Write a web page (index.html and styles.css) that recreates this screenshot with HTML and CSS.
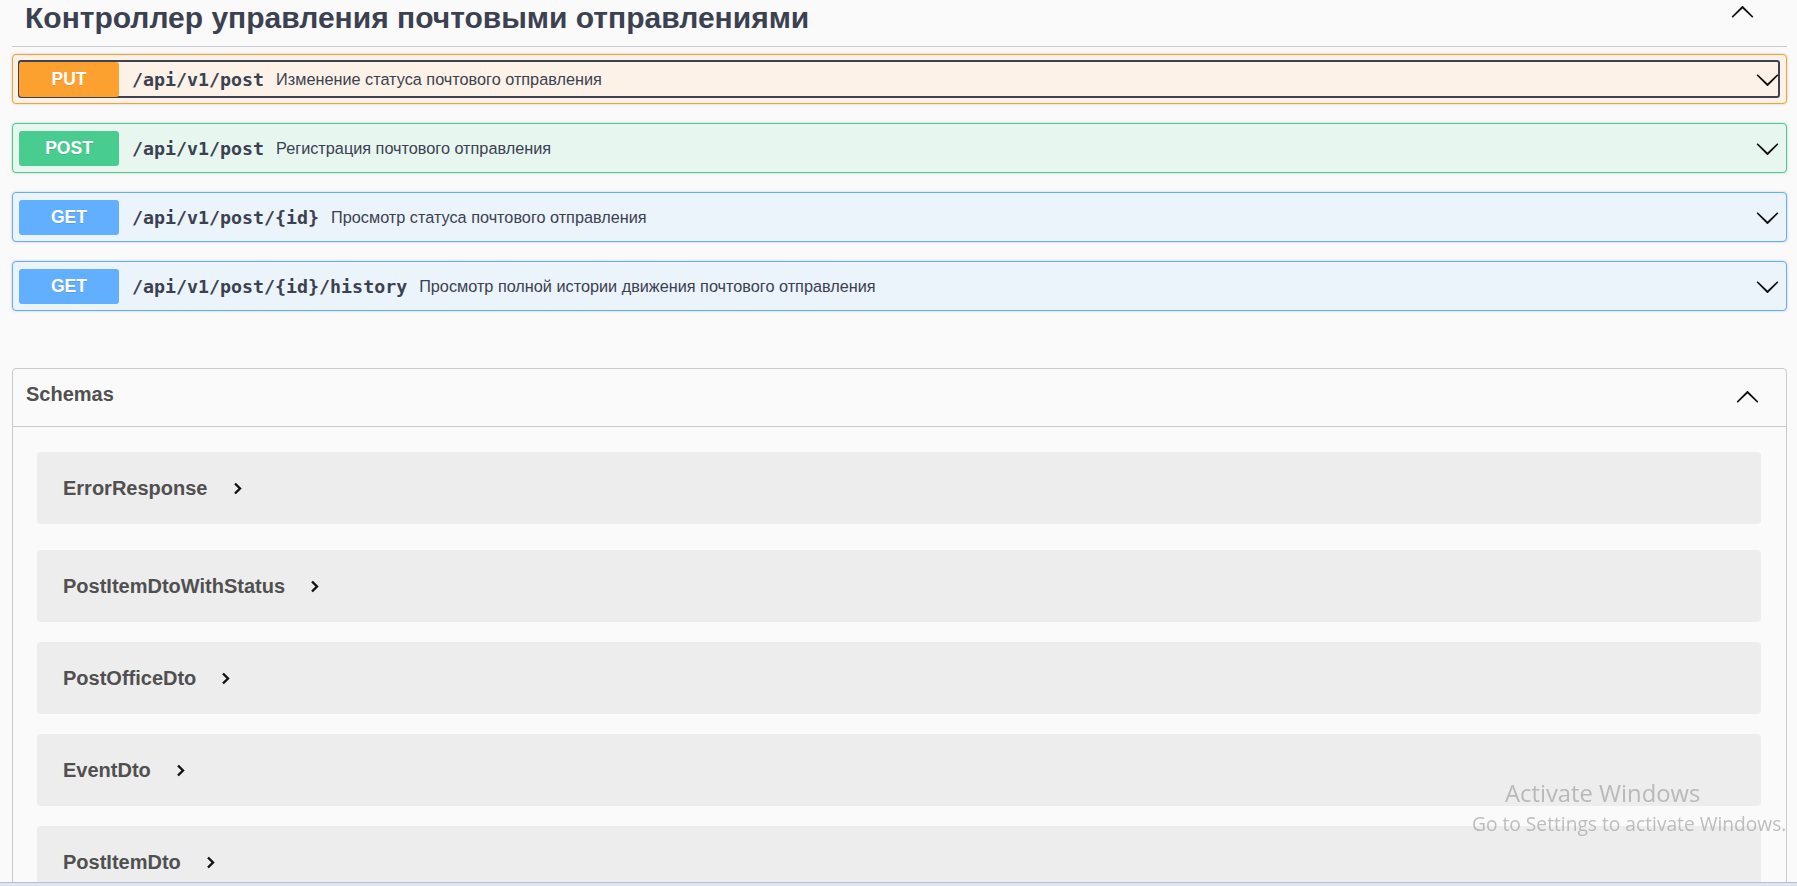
FILE: index.html
```html
<!DOCTYPE html>
<html lang="ru">
<head>
<meta charset="utf-8">
<title>Swagger UI</title>
<link rel="stylesheet" href="styles.css">
</head>
<body>
<div class="page">
  <div class="tag-head">
    <h3 class="tag-title">Контроллер управления почтовыми отправлениями</h3>
    <svg class="arrow up" viewBox="0 0 20 20" width="25" height="25"><path d="M17.418 6.109c.272-.268.709-.268.979 0s.271.701 0 .969l-7.908 7.83c-.27.268-.707.268-.979 0l-7.908-7.83c-.27-.268-.27-.701 0-.969.271-.268.709-.268.979 0L10 13.25l7.418-7.141z"/></svg>
  </div>

  <div class="ops">
    <div class="op put">
      <div class="summary focused">
        <span class="method">PUT</span>
        <span class="path">/api/v1/post</span>
        <span class="desc">Изменение статуса почтового отправления</span>
        <svg class="arrow" viewBox="0 0 20 20" width="25" height="25"><path d="M17.418 6.109c.272-.268.709-.268.979 0s.271.701 0 .969l-7.908 7.83c-.27.268-.707.268-.979 0l-7.908-7.83c-.27-.268-.27-.701 0-.969.271-.268.709-.268.979 0L10 13.25l7.418-7.141z"/></svg>
      </div>
    </div>
    <div class="op post">
      <div class="summary">
        <span class="method">POST</span>
        <span class="path">/api/v1/post</span>
        <span class="desc">Регистрация почтового отправления</span>
        <svg class="arrow" viewBox="0 0 20 20" width="25" height="25"><path d="M17.418 6.109c.272-.268.709-.268.979 0s.271.701 0 .969l-7.908 7.83c-.27.268-.707.268-.979 0l-7.908-7.830c-.27-.268-.27-.701 0-.969.271-.268.709-.268.979 0L10 13.25l7.418-7.141z"/></svg>
      </div>
    </div>
    <div class="op get">
      <div class="summary">
        <span class="method">GET</span>
        <span class="path">/api/v1/post/{id}</span>
        <span class="desc">Просмотр статуса почтового отправления</span>
        <svg class="arrow" viewBox="0 0 20 20" width="25" height="25"><path d="M17.418 6.109c.272-.268.709-.268.979 0s.271.701 0 .969l-7.908 7.83c-.27.268-.707.268-.979 0l-7.908-7.83c-.27-.268-.27-.701 0-.969.271-.268.709-.268.979 0L10 13.25l7.418-7.141z"/></svg>
      </div>
    </div>
    <div class="op get">
      <div class="summary">
        <span class="method">GET</span>
        <span class="path">/api/v1/post/{id}/history</span>
        <span class="desc">Просмотр полной истории движения почтового отправления</span>
        <svg class="arrow" viewBox="0 0 20 20" width="25" height="25"><path d="M17.418 6.109c.272-.268.709-.268.979 0s.271.701 0 .969l-7.908 7.83c-.27.268-.707.268-.979 0l-7.908-7.83c-.27-.268-.27-.701 0-.969.271-.268.709-.268.979 0L10 13.25l7.418-7.141z"/></svg>
      </div>
    </div>
  </div>

  <section class="models">
    <div class="models-head">
      <h4 class="models-title">Schemas</h4>
      <svg class="arrow up" viewBox="0 0 20 20" width="25" height="25"><path d="M17.418 6.109c.272-.268.709-.268.979 0s.271.701 0 .969l-7.908 7.83c-.27.268-.707.268-.979 0l-7.908-7.83c-.27-.268-.27-.701 0-.969.271-.268.709-.268.979 0L10 13.25l7.418-7.141z"/></svg>
    </div>
    <div class="model-list">
      <div class="model"><span class="model-title">ErrorResponse</span><svg class="toggle" viewBox="0 0 9 13" width="9" height="13"><polyline points="2,1.5 7,6.5 2,11.5"/></svg></div>
      <div class="model"><span class="model-title">PostItemDtoWithStatus</span><svg class="toggle" viewBox="0 0 9 13" width="9" height="13"><polyline points="2,1.5 7,6.5 2,11.5"/></svg></div>
      <div class="model"><span class="model-title">PostOfficeDto</span><svg class="toggle" viewBox="0 0 9 13" width="9" height="13"><polyline points="2,1.5 7,6.5 2,11.5"/></svg></div>
      <div class="model"><span class="model-title">EventDto</span><svg class="toggle" viewBox="0 0 9 13" width="9" height="13"><polyline points="2,1.5 7,6.5 2,11.5"/></svg></div>
      <div class="model"><span class="model-title">PostItemDto</span><svg class="toggle" viewBox="0 0 9 13" width="9" height="13"><polyline points="2,1.5 7,6.5 2,11.5"/></svg></div>
    </div>
  </section>
</div>

<div class="watermark">
  <div class="wm-1">Activate Windows</div>
  <div class="wm-2">Go to Settings to activate Windows.</div>
</div>
<div class="taskbar"></div>
</body>
</html>
```

FILE: styles.css
```css
html, body {
  margin: 0;
  padding: 0;
  background: #fafafa;
  height: 886px;
  overflow: hidden;
}

.page {
  padding: 0 10px 0 12px;
  font-family: "Liberation Sans", Arial, sans-serif;
  color: #3b4151;
}

.tag-head {
  display: flex;
  align-items: flex-start;
  justify-content: space-between;
  height: 46px;
  border-bottom: 1px solid #c9cacd;
}

.tag-title {
  margin: 0;
  padding-left: 13px;
  font-size: 30px;
  line-height: 36px;
  font-weight: bold;
  color: #3b4151;
}

.arrow {
  display: block;
  flex: none;
  fill: #111;
}

.arrow.up {
  transform: rotate(180deg);
}

.tag-head .arrow {
  margin: 0 32px 0 0;
}

.ops {
  padding-top: 7px;
}

.op {
  border: 1px solid;
  border-radius: 4px;
  margin-bottom: 19px;
  box-shadow: 0 0 3px rgba(0, 0, 0, .19);
  padding: 5px 6px 5px 5px;
}

.op.put {
  background: #fcf2e7;
  border-color: #fca130;
}

.op.post {
  background: #e8f6f0;
  border-color: #49cc90;
}

.op.get {
  background: #ebf3fb;
  border-color: #61affe;
}

.summary {
  display: flex;
  align-items: center;
  height: 38px;
  border-radius: 3px;
}

.summary.focused {
  box-shadow: inset 0 0 0 2px #3d4150;
}

.method {
  flex: none;
  width: 100px;
  height: 35px;
  margin-left: 1px;
  display: flex;
  align-items: center;
  justify-content: center;
  border-radius: 3px;
  color: #fff;
  font-size: 17.5px;
  font-weight: bold;
  text-shadow: 0 1px 0 rgba(0, 0, 0, .1);
}

.put .method { background: #fca130; }
.post .method { background: #49cc90; }
.get .method { background: #61affe; }

.path {
  margin-left: 13px;
  font-family: "DejaVu Sans Mono", "Liberation Mono", monospace;
  font-weight: bold;
  font-size: 18.3px;
  color: #3b4151;
}

.desc {
  flex: 1;
  margin-left: 12px;
  font-size: 16.25px;
  color: #3b4151;
}

.models {
  margin-top: 57px;
  border: 1px solid #c9cacd;
  border-radius: 4px;
  height: 600px;
}

.models-head {
  display: flex;
  align-items: center;
  justify-content: space-between;
  height: 57px;
  padding: 0 26px 0 13px;
  border-bottom: 1px solid #c9cacd;
}

.models-title {
  margin: 0 0 6px;
  font-size: 20px;
  font-weight: bold;
  color: #505050;
}

.model-list {
  display: flex;
  flex-direction: column;
  gap: 20px;
  padding: 25px 25px 0 24px;
}

.model {
  display: flex;
  align-items: center;
  flex: none;
  height: 72px;
  padding-left: 26px;
  background: #ededed;
  border-radius: 4px;
}

.model:first-child {
  margin-bottom: 6px;
}

.model-title {
  font-size: 20px;
  font-weight: bold;
  color: #505050;
}

.toggle {
  margin-left: 25px;
  fill: none;
  stroke: #111;
  stroke-width: 2.4;
}

.watermark {
  position: fixed;
  left: 1505px;
  top: 777px;
  font-family: "Open Sans", "Noto Sans", sans-serif;
  color: rgba(150, 150, 150, .6);
}

.wm-1 {
  font-size: 23.8px;
  line-height: 33px;
}

.wm-2 {
  margin-left: -33px;
  font-size: 19.2px;
  line-height: 28px;
}

.taskbar {
  position: fixed;
  left: 0;
  right: 0;
  bottom: 0;
  height: 3px;
  border-top: 1px solid #b7c1cd;
  background: #dce7f3;
}
```
